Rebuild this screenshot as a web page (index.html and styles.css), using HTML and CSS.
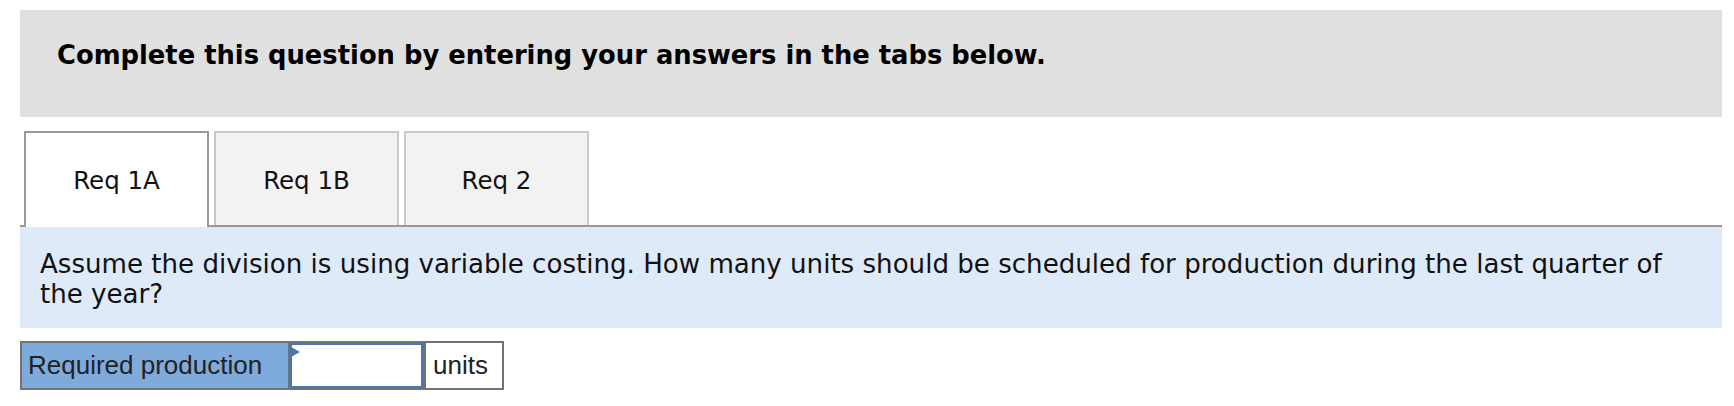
FILE: index.html
```html
<!DOCTYPE html>
<html lang="en">
<head>
<meta charset="utf-8">
<title>Req 1A</title>
<link rel="stylesheet" href="styles.css">
</head>
<body>
<div class="page">
  <div class="banner">
    <h2 class="banner-title">Complete this question by entering your answers in the tabs below.</h2>
  </div>
  <div class="tabs">
    <div class="tab tab-active">Req 1A</div>
    <div class="tab">Req 1B</div>
    <div class="tab">Req 2</div>
  </div>
  <div class="panel">
    <p class="question">Assume the division is using variable costing. How many units should be scheduled for production during the last quarter of the year?</p>
  </div>
  <div class="answer">
    <div class="answer-label">Required production</div>
    <div class="answer-input">
      <span class="flag"></span>
      <input class="field" type="text" aria-label="Required production">
    </div>
    <div class="answer-units">units</div>
  </div>
</div>
</body>
</html>
```
FILE: styles.css
```css
html, body {
  margin: 0;
  padding: 0;
  background: #fff;
}

.page {
  padding: 10px 12px 0 20px;
  font-family: "DejaVu Sans", Verdana, sans-serif;
  color: #000;
}

.banner {
  background: #e0e0e0;
  height: 107px;
  box-sizing: border-box;
  padding: 30px 0 0 37px;
}

.banner-title {
  margin: 0;
  font-size: 25.8px;
  line-height: 30px;
  font-weight: bold;
  color: #000;
}

.tabs {
  margin-top: 14px;
  display: flex;
  align-items: flex-end;
  gap: 5px;
  padding-left: 4px;
  border-bottom: 2px solid #999;
  height: 94px;
}

.tab {
  width: 185px;
  height: 94px;
  box-sizing: border-box;
  border: 2px solid #c9c9c9;
  border-bottom: none;
  background: #f2f2f2;
  display: flex;
  align-items: center;
  justify-content: center;
  padding-top: 3px;
  font-size: 24.5px;
  color: #111;
}

.tab-active {
  height: 96px;
  margin-bottom: -2px;
  background: #fff;
  border-color: #999;
  padding-top: 1px;
}

.panel {
  background: #deeaf7;
  padding: 22px 40px 19px 20px;
}

.question {
  margin: 0;
  font-size: 26.1px;
  line-height: 30px;
  color: #111;
}

.answer {
  margin-top: 13px;
  display: inline-flex;
  border: 2px solid #737373;
  height: 49px;
  box-sizing: border-box;
  font-family: "Liberation Sans", Arial, sans-serif;
  font-size: 26px;
  color: #222;
}

.answer-label {
  width: 268px;
  background: #7faadc;
  border-right: 2px solid #737373;
  padding-left: 6px;
  box-sizing: border-box;
  display: flex;
  align-items: center;
}

.answer-input {
  position: relative;
  width: 133px;
  display: flex;
}

.field {
  width: 100%;
  height: 100%;
  margin: 0;
  box-sizing: border-box;
  border: 2px solid #4a76b8;
  background: #fff;
  outline: none;
  padding: 0 6px;
  font: inherit;
}

.flag {
  position: absolute;
  left: 1px;
  top: 4px;
  width: 0;
  height: 0;
  border-top: 5px solid transparent;
  border-bottom: 5px solid transparent;
  border-left: 9px solid #4a76b8;
}

.answer-units {
  width: 79px;
  border-left: 3px solid #737373;
  background: #fff;
  box-sizing: border-box;
  padding-left: 7px;
  display: flex;
  align-items: center;
}
```
